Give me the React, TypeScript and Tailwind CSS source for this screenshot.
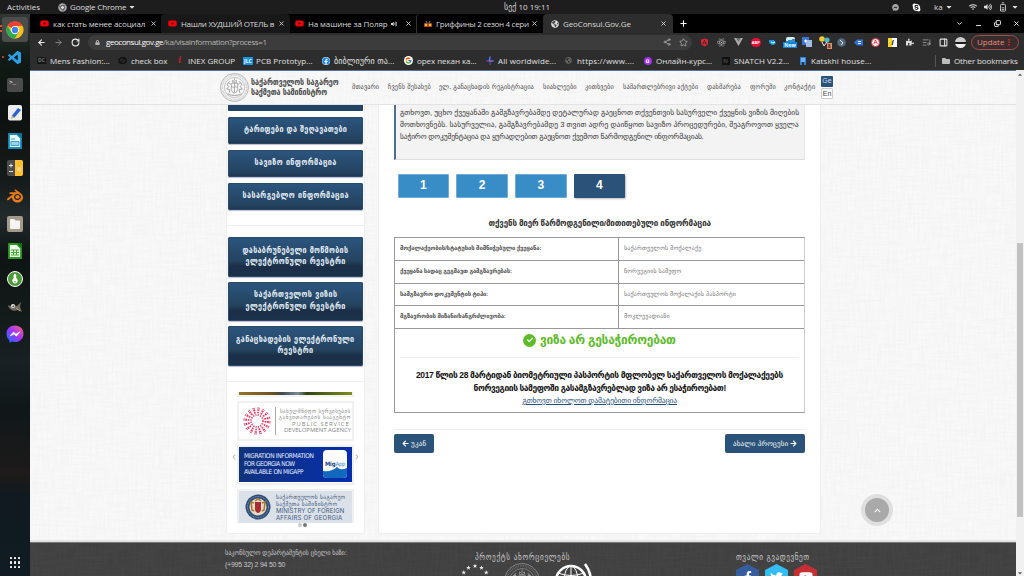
import { useLayoutEffect, useRef, useState } from "react";
import type { ReactNode } from "react";
import {
  FaYoutube, FaFacebook, FaReact, FaAngular, FaFolder, FaPuzzlePiece, FaSkype, FaFacebookMessenger,
  FaCaretDown, FaWifi, FaVolumeUp, FaLock, FaCheck, FaArrowLeft, FaArrowRight, FaGlobeAmericas, FaFacebookF,
  FaTwitter, FaKey, FaChevronUp, FaChevronLeft, FaChevronRight,
} from "react-icons/fa";
import { FcGoogle } from "react-icons/fc";
import { VscVscode } from "react-icons/vsc";
import { SiBlender } from "react-icons/si";
import { ArrowLeft, ArrowRight, RotateCw, Share2, Star, X, Plus, ChevronDown, Minus, Copy, PanelRight, ListMusic, BatteryMedium } from "lucide-react";

/* One line of text, tracked so that it takes exactly the given width. */
function Line({ w, className = "", children }: { w: number; className?: string; children: string }) {
  const ref = useRef<HTMLSpanElement>(null);
  const [spacing, setSpacing] = useState(0);
  useLayoutEffect(() => {
    if (ref.current) setSpacing((w - ref.current.offsetWidth) / children.length);
  }, [w, children]);
  return (
    <span className={`inline-block shrink-0 whitespace-nowrap text-left ${className}`} style={{ width: w }}>
      <span ref={ref} className="inline-block [text-decoration:inherit]" style={{ letterSpacing: spacing }}>{children}</span>
    </span>
  );
}

function Linen({ dark = false }: { dark?: boolean }) {
  const id = dark ? "linen-dark" : "linen";
  return (
    <svg className={dark ? "absolute inset-0 h-full w-full opacity-[0.04]" : "absolute inset-0 h-full w-full opacity-[0.055]"} aria-hidden="true">
      <filter id={id + "h"}><feTurbulence type="fractalNoise" baseFrequency="0.04 0.5" numOctaves="2" /><feColorMatrix type="matrix" values="0 0 0 0 0.4  0 0 0 0 0.4  0 0 0 0 0.4  0 0 0 2.4 -0.9" /></filter>
      <filter id={id + "v"}><feTurbulence type="fractalNoise" baseFrequency="0.5 0.04" numOctaves="2" /><feColorMatrix type="matrix" values="0 0 0 0 0.4  0 0 0 0 0.4  0 0 0 0 0.4  0 0 0 2.4 -0.9" /></filter>
      <rect width="100%" height="100%" filter={`url(#${id}h)`} />
      <rect width="100%" height="100%" filter={`url(#${id}v)`} />
    </svg>
  );
}

function ChromeLogo({ size }: { size: number }) {
  return (
    <svg width={size} height={size} viewBox="0 0 48 48">
      <circle cx="24" cy="24" r="23" fill="#fbc116" />
      <path d="M24 24 4 12.500A23 23 0 0 1 44 12.500L24 13Z" fill="#e94235" />
      <path d="M4 12.500A23 23 0 0 0 23 47L34 29 14 29Z" fill="#31a852" />
      <circle cx="24" cy="24" r="11" fill="#fff" />
      <circle cx="24" cy="24" r="8.500" fill="#3f83f1" />
    </svg>
  );
}

function TopBar() {
  return (
    <div className="flex h-[14px] items-center bg-[#1d1d1d] text-[8px] text-[#dedede]">
      <div className="flex w-[504px] items-center pl-[7px]">
        <Line w={33}>Activities</Line>
        <svg className="ml-[18px]" width="9" height="9" viewBox="0 0 20 20"><circle cx="10" cy="10" r="9.500" fill="#aaa" /><circle cx="10" cy="10" r="4.500" fill="#ddd" stroke="#444" strokeWidth="2" /><path d="M10 5h9M6 12 2 5M14 12l-4 7" stroke="#555" strokeWidth="1.500" /></svg>
        <Line w={56} className="ml-[3px]">Google Chrome</Line>
        <FaCaretDown size={8} className="ml-[2px]" />
      </div>
      <Line w={46}>სექ 10  19:11</Line>
      <div className="ml-auto flex items-center">
        <FaFacebookMessenger size={7} className="text-[#aaa]" />
        <FaSkype size={9} className="ml-[13px] text-white" />
        <Line w={9} className="ml-[13px]">ka</Line>
        <FaCaretDown size={8} className="ml-[2px]" />
        <FaWifi size={8} className="ml-[16px]" />
        <FaVolumeUp size={8} className="ml-[7px]" />
        <BatteryMedium size={10} className="ml-[6px] -rotate-90" />
        <FaCaretDown size={8} className="ml-[3px] mr-[5px]" />
      </div>
    </div>
  );
}

function Dock() {
  const icons: ReactNode[] = [
    <div className="grid h-[25px] w-[26px] place-items-center rounded-[3px] bg-[#4a4d4b]"><ChromeLogo size={18} /></div>,
    <VscVscode size={16} className="text-[#2b9fe8]" />,
    <div className="h-[14px] w-[16px] rounded-[2px] bg-[#4b4b4b] pl-[2px] font-mono text-[6px] leading-[9px] text-white">&gt;_</div>,
    <svg width="15" height="16" viewBox="0 0 15 16"><rect width="14" height="15.500" rx="2" fill="#ededed" /><path d="M4 10.500 10 3l3 2-6.500 7.500-3 1Z" fill="#2c62d0" /><path d="m3.500 13.500.8-3 2.200 2Z" fill="#e6b271" /></svg>,
    <svg width="14" height="16" viewBox="0 0 14 16"><path d="M1 1h8l4 4v10H1Z" fill="#e9f6fc" stroke="#178cba" strokeWidth="1.800" /><path d="M9 0h5v5Z" fill="#0c6e97" /><path d="M3 6h4M3 8.500h8v4H3Z" stroke="#36a3d0" strokeWidth="1" fill="#9fd0e8" /></svg>,
    <svg width="16" height="16" viewBox="0 0 16 16"><rect width="16" height="16" rx="2" fill="#4d4d4d" /><path d="M8 0h6a2 2 0 0 1 2 2v12a2 2 0 0 1-2 2H8Z" fill="#fdc02f" /><path d="M2 5.500h4M4 3.500v4M2 11.500h4M10 8h4M10 10h4" stroke="#f4f4f4" strokeWidth=".9" /></svg>,
    <SiBlender size={16} className="text-[#ea7b17]" />,
    <svg width="16" height="16" viewBox="0 0 16 16"><rect width="16" height="16" rx="2" fill="#a39a8b" /><path d="M3 4q0-1 1-1h3l1.500 1.500H12q1 0 1 1V12q0 1-1 1H4q-1 0-1-1Z" fill="#f6f4f0" /></svg>,
    <svg width="14" height="16" viewBox="0 0 14 16"><path d="M1 1h8l4 4v10H1Z" fill="#f0f9ec" stroke="#289c1c" strokeWidth="1.800" /><path d="M9 0h5v5Z" fill="#0d7510" /><path d="M3 7h8M3 9.500h8M3 12h8M5.500 7v5M8.500 7v5" stroke="#3ca92f" /></svg>,
    <div className="grid size-[16px] place-items-center rounded-full border-[1.5px] border-white bg-[#4e9a3b] text-white"><FaKey size={8} className="rotate-[135deg]" /></div>,
    <svg width="16" height="12" viewBox="0 0 16 12"><path d="M1 4q3 2 5 0l4 1 4-4-1 5 2 5-4-2q-5 2-8-1Q1 6 1 4" fill="#716c60" /><circle cx="6" cy="5" r="2" fill="#eee" /><circle cx="6.200" cy="5.200" r=".8" fill="#111" /><path d="m9 7 4 3" stroke="#b9a273" /></svg>,
    <svg width="18" height="18" viewBox="0 0 18 18"><defs><linearGradient id="msg" x1="0" y1="1" x2="1" y2="0"><stop stopColor="#087bff" /><stop offset=".5" stopColor="#a033ff" /><stop offset="1" stopColor="#ff6968" /></linearGradient></defs><path d="M9 .5c5 0 8.500 3.600 8.500 8.200S14 17 9 17q-1.500 0-2.800-.4L3.500 17.700 3.400 15.200Q.500 12.800.500 8.700C.500 4 4 .500 9 .500Z" fill="url(#msg)" /><path d="m4 11 3.500-4 2.500 2 4-2.200-3.500 4.400-2.600-2Z" fill="#fff" stroke="#fff" strokeWidth=".5" /></svg>,
  ];
  return (
    <div className="relative flex w-[30px] shrink-0 flex-col bg-[#151c1d] bg-[linear-gradient(180deg,#323834_0,#111a16_8%,#0d110f_18%,#161c1b_30%,#222a2c_36%,#0e1413_43%,#141b1b_55%,#182024_62%,#101719_70%,#1d1a1a_82%,#101a20_86%,#111b23_100%)]">
      <div className="h-[2px]" />
      {icons.map((icon, i) => (
        <div key={i} className="grid h-[27.7px] w-[30px] shrink-0 place-items-center">{icon}</div>
      ))}
      <div className="absolute left-0 top-[11px] h-[7px] w-[2px] border-y-[2px] border-[#e95420]" />
      <div className="absolute left-[2px] top-[42px] size-[2px] rounded-full bg-[#e95420]" />
      <div className="mx-auto mb-[8px] mt-auto grid grid-cols-3 gap-[2px]">
        {Array.from({ length: 9 }, (_, i) => <i key={i} className="size-[2.300px] rounded-[0.500px] bg-[#f1f1f1]" />)}
      </div>
    </div>
  );
}

function Tab({ icon, title, width, textWidth, extra, tone = "" }: { icon: ReactNode; title: string; width: string; textWidth: number; extra?: ReactNode; tone?: string }) {
  return (
    <div className={`flex h-full shrink-0 items-center rounded-t-[4px] text-[8px] text-[#d8d8d8] ${width} ${tone}`}>
      <span className="grid w-[9px] place-items-center">{icon}</span>
      <Line w={textWidth} className="ml-[4px]">{title}</Line>
      <span className="ml-auto flex items-center gap-[8px]">{extra}<X size={7} strokeWidth={3} /></span>
    </div>
  );
}

function Tabs() {
  const yt = <FaYoutube size={9} className="text-[#f4000b]" />;
  return (
    <div className="flex h-[19px] items-stretch bg-black">
      <Tab icon={yt} title="как стать менее асоциал" width="w-[131px] pl-[10px] pr-[4px]" textWidth={92} />
      <Tab icon={yt} title="Нашли ХУДШИЙ ОТЕЛЬ в" width="w-[129px] pl-[7px] pr-[5px]" textWidth={93} tone="bg-[#181818]" />
      <Tab icon={yt} title="На машине за Поляр" width="w-[126px] pl-[5px] pr-[4px]" textWidth={80} extra={<FaVolumeUp size={6} />} />
      <Tab icon={<svg width="8" height="8" viewBox="0 0 8 8"><path d="M0 3h8v4H0Z" fill="#a33a22" /><circle cx="2" cy="5" r="1.300" fill="#ffb629" /><circle cx="6" cy="5" r="1.300" fill="#ffb629" /><path d="m2 1 1 2M6 1 5 3" stroke="#29a69a" /></svg>} title="Гриффины 2 сезон 4 сери" width="w-[127px] border-l border-[#333] pl-[6px] pr-[5px]" textWidth={93} />
      <Tab icon={<FaGlobeAmericas size={8} />} title="GeoConsul.Gov.Ge" width="w-[130px] pl-[7px] pr-[6px]" textWidth={68} tone="bg-[#2d2d2d]" />
      <div className="flex flex-1 items-center justify-between pl-[6px] pr-[4px] text-white">
        <Plus size={9} strokeWidth={3} />
        <div className="flex items-center gap-[12px]">
          <ChevronDown size={7} strokeWidth={3} /><Minus size={7} strokeWidth={3} className="translate-y-[2px]" /><Copy size={7} strokeWidth={3} className="-scale-y-100" /><X size={7} strokeWidth={3} />
        </div>
      </div>
    </div>
  );
}

function Toolbar() {
  const extensions: ReactNode[] = [
    <FaAngular size={9} className="text-[#df2435]" />,
    <FaReact size={9} className="text-[#bbb]" />,
    <svg width="9" height="8" viewBox="0 0 9 8"><path d="M0 0h2.500l2 3.500L6.500 0H9L4.500 8Z" fill="#aaa" /><path d="M2.500 0h1.500l.5 1 .5-1h1.500l-2 3.500Z" fill="#777" /></svg>,
    <span className="rounded-full bg-[#e40d36] px-px text-[4px] font-bold leading-[9px] text-white">ABP</span>,
    <svg width="9" height="9" viewBox="0 0 9 9"><path d="M1 2h5l2 3-2 2H4L1 5Z" fill="#1496e1" /><path d="m3 4 2 1 2-1" stroke="#fff" fill="none" /></svg>,
    <span className="flex flex-col items-center"><i className="h-[5px] w-[9px] rounded-t-[2px] bg-[linear-gradient(165deg,#d5edf4_55%,#2f8fc5_56%)]" /><b className="bg-[#0b83e2] px-px text-[5px] leading-[6px] text-white">New</b></span>,
    <svg width="10" height="10" viewBox="0 0 10 10"><rect width="7" height="8" fill="#3976d9" /><rect x="4" y="3" width="6" height="7" fill="#a4bce2" /><path d="M2 4h3M3.500 2.500v3" stroke="#fff" /></svg>,
    <span className="relative"><svg width="11" height="12" viewBox="0 0 11 12"><circle cx="3" cy="3" r="2.800" fill="#f1ca33" /><circle cx="8" cy="4" r="2.600" fill="#51b6c5" /><path d="M3 6l2 4 3-4" stroke="#eee" fill="none" /></svg><b className="absolute -bottom-[1px] -right-[2px] bg-[#f18a66] px-[1px] text-[5px] leading-[6px] text-[#333]">8</b></span>,
    <svg width="9" height="9" viewBox="0 0 9 9"><circle cx="4.500" cy="4.500" r="4.300" fill="#53697e" /><path d="m3 2 3 3-2 2" stroke="#eaeaea" fill="none" /></svg>,
    <svg width="9" height="7" viewBox="0 0 9 7"><path d="m0 3.500 3-3h6v6H3Z" fill="#2b73d7" /><path d="M4 2.500h3M4 4.500h3" stroke="#fff" /></svg>,
    <span className="grid size-[9px] place-items-center rounded-full border border-[#e62937] bg-white text-[6px] font-bold leading-none text-[#e62937]">A</span>,
    <span className="grid size-[9px] place-items-center bg-[linear-gradient(90deg,#fcd52b_50%,#fff_50%)] text-[7px] font-bold italic leading-none text-black">i</span>,
    <FaPuzzlePiece size={8} className="text-[#ddd]" />,
    <ListMusic size={9} className="text-[#aaa]" />,
    <PanelRight size={9} className="text-[#ddd]" strokeWidth={3} />,
    <span className="size-[11px] rounded-full bg-[linear-gradient(180deg,#ccc_0_45%,#1c1c1c_45%_65%,#eee_65%)]" />,
  ];
  return (
    <div className="flex h-[18px] items-center bg-[#2d2d2d] text-[8px]">
      <div className="flex w-[58px] items-center gap-[8px] pl-[7px] text-[#e7e7e7]">
        <ArrowLeft size={9} strokeWidth={3} /><ArrowRight size={9} strokeWidth={2.500} className="text-[#888]" /><RotateCw size={9} strokeWidth={3} />
      </div>
      <div className="flex h-[15px] w-[604px] items-center rounded-full bg-[#3c3c3c] pl-[7px] pr-[4px] text-[#b4b4b4]">
        <FaLock size={5} />
        <Line w={57} className="ml-[6px] text-white">geoconsul.gov.ge</Line>
        <Line w={104}>/ka/visaInformation?process=1</Line>
        <Share2 size={8} className="ml-auto" /><Star size={9} className="ml-[8px]" />
      </div>
      <div className="ml-[4px] flex">
        {extensions.map((e, i) => <span key={i} className="grid h-[14px] w-[17.100px] place-items-center">{e}</span>)}
      </div>
      <div className="ml-auto mr-[5px] flex h-[15px] w-[48px] shrink-0 items-center justify-between rounded-full border border-[#9c514c] bg-[#382d2c] pl-[5px] pr-[5px] text-[#f08b82]">
        <Line w={27}>Update</Line><b className="text-[#d92d25]">⋮</b>
      </div>
    </div>
  );
}

function Bookmarks() {
  const items: [ReactNode, string, number, string][] = [
    [<b className="bg-[#151515] px-[1px] text-[5px] leading-[7px] text-[#777]">DC</b>, "Mens Fashion:...", 60, "w-[81px]"],
    [<svg width="9" height="7" viewBox="0 0 9 7"><ellipse cx="4.500" cy="3.500" rx="3.700" ry="2.800" fill="none" stroke="#111" strokeWidth="1.400" /><path d="m2 5 5-3" stroke="#111" /></svg>, "check box", 36, "w-[57px]"],
    [<b className="font-serif text-[9px] italic leading-none text-[#c4262e]">i</b>, "INEX GROUP", 47, "w-[68px]"],
    [<b className="bg-[#1694e9] px-px text-[5px] leading-[8px] text-white">JLC</b>, "PCB Prototyp...", 57, "w-[78px]"],
    [<FaFacebook size={8} className="rounded-full bg-white text-[#1688ec]" />, "ბიბლიური თა...", 61, "w-[83px]"],
    [<span className="grid size-[9px] place-items-center rounded-full bg-white"><FcGoogle size={7} /></span>, "орех пекан ка...", 60, "w-[81px]"],
    [<svg width="8" height="9" viewBox="0 0 8 9"><circle cx="4" cy="4.500" r="3.800" fill="#112f66" /><path d="M4 0v9M0 5h8" stroke="#cc3f46" /><path d="M4 1 3 5h4" stroke="#4a90d8" fill="none" /></svg>, "All worldwide...", 58, "w-[79px]"],
    [<FaGlobeAmericas size={7} className="text-[#666]" />, "https://www....", 57, "w-[79px]"],
    [<span className="grid size-[8px] place-items-center rounded-full bg-[#a034ec] text-[6px] font-bold leading-none text-white">û</span>, "Онлайн-курс...", 56, "w-[78px]"],
    [<b className="size-[8px] bg-[#111] text-center text-[6px] leading-[8px] text-[#444]">N</b>, "SNATCH V2.2...", 55, "w-[77px]"],
    [<svg width="8" height="8" viewBox="0 0 8 8"><path d="M1 0h6v8H5V5H3v3H1Z" fill="#2984e1" /><path d="M2 2h4M2 4h4" stroke="#c5dff9" /></svg>, "Katskhi house...", 60, "w-[80px]"],
  ];
  return (
    <div className="flex h-[19px] items-center bg-[#2d2d2d] pl-[7px] text-[8px] text-[#e0e0e0]">
      {items.map(([icon, label, w, cell]) => (
        <div key={label} className={`flex shrink-0 items-center gap-[4px] ${cell}`}><span className="grid w-[9px] place-items-center">{icon}</span><Line w={w}>{label}</Line></div>
      ))}
      <div className="ml-auto flex items-center gap-[4px] border-l border-[#555] pl-[6px] pr-[6px]"><FaFolder size={8} className="text-[#bdbdbd]" /><Line w={64}>Other bookmarks</Line></div>
    </div>
  );
}

function Seal({ size, color }: { size: number; color: string }) {
  return (
    <svg width={size} height={size} viewBox="0 0 56 56" fill="none" stroke={color} className="shrink-0">
      <circle cx="28" cy="28" r="27" strokeWidth="1.200" /><circle cx="28" cy="28" r="23.500" strokeWidth="3" strokeDasharray="1.200 1.400" opacity=".5" /><circle cx="28" cy="28" r="19.500" strokeWidth="1" />
      <path d="M22 20v12q0 5 6 7 6-2 6-7V20ZM28 20v18M22 27h12M24 18v-4l4 2 4-2v4Zm4-4v-4" strokeWidth="1.300" />
      <path d="M21 22q-7-6-7 1l3 3-4 5 6 1-1 6M35 22q7-6 7 1l-3 3 4 5-6 1 1 6M14 40q14 7 28 0M19 16l-3 3M37 16l3 3" strokeWidth="1.600" />
    </svg>
  );
}

function SiteHeader() {
  const nav: [string, number, string][] = [
    ["მთავარი", 27, "w-[36px]"], ["ჩვენს შესახებ", 43, "w-[51px]"], ["ელ. განაცხადის რეგისტრაცია", 95, "w-[104px]"], ["სიახლეები", 34, "w-[42px]"],
    ["კითხვები", 29, "w-[38px]"], ["სამართლებრივი აქტები", 75, "w-[84px]"], ["დახმარება", 34, "w-[43px]"], ["ფორუმი", 26, "w-[34px]"], ["კონტაქტი", 31, "w-[37px]"],
  ];
  return (
    <header className="relative flex h-[35px] items-center border-b border-t border-b-[#e3e3e3] border-t-[#55729b] pl-[190px] font-['DejaVu_Sans_Condensed','DejaVu_Sans',sans-serif]">
      <Seal size={29} color="#929292" />
      <div className="ml-[2px] flex w-[101px] flex-col text-[8px] font-bold leading-[10px] text-[#484848]">
        <Line w={88}>საქართველოს საგარეო</Line><Line w={76}>საქმეთა სამინისტრო</Line>
      </div>
      {nav.map(([label, w, cell]) => <span key={label} className={`flex text-[7px] text-[#444] ${cell}`}><Line w={w}>{label}</Line></span>)}
      <div className="flex flex-col gap-[1px] text-center font-['Liberation_Sans',sans-serif] text-[7px] leading-[10px]">
        <span className="h-[11px] w-[12px] rounded-[1px] bg-[#2b5278] text-[#d5dfe8]">Ge</span>
        <span className="h-[11px] w-[12px] rounded-[1px] border border-[#ccc] bg-white leading-[9px] text-[#444]">En</span>
      </div>
    </header>
  );
}

function MenuButton({ lines }: { lines: [string, number][] }) {
  const tall = lines.length > 1;
  return (
    <div className={`flex shrink-0 flex-col items-center justify-center rounded-[1px] border border-[#2a4a6b] pb-[1px] text-[8px] font-bold leading-[11.500px] text-[#e6eef6] shadow-[0_1px_1px_#bbc] ${tall ? "h-[39.500px] bg-[linear-gradient(180deg,#2c557e_0%,#24435f_60%,#1b2f47_75%,#1b314a_100%)]" : "h-[27.500px] bg-[linear-gradient(180deg,#2c557e,#234260_85%,#1f3853)]"}`}>
      {lines.map(([text, w]) => <Line key={text} w={w}>{text}</Line>)}
    </div>
  );
}

function Banners() {
  return (
    <div className="flex items-center justify-between px-[4px]">
      <FaChevronLeft size={6} className="text-[#bbb]" />
      <div className="flex h-[131px] w-[118px] flex-col gap-[4px] overflow-hidden">
        <div className="h-[5px] shrink-0 border-x-2 border-b-2 border-[#f3f3f3] bg-[linear-gradient(90deg,#927525,#6a521e_30%,#41484b_38%,#7a8b9c_52%,#314515_60%,#81901b)]" />
        <div className="flex h-[40px] shrink-0 items-center border-2 border-[#f1f1f1] bg-white pl-[4px]">
          <svg width="28" height="28" viewBox="0 0 28 28" fill="none" stroke="#e9375e">{[6, 8.500, 11, 13].map((r, i) => <circle key={r} cx="14" cy="14" r={r} strokeWidth={i === 3 ? 1 : 1.700} strokeDasharray={`${(r * 6.2832) / 32} ${(r * 6.2832) / 32}`} />)}</svg>
          <div className="ml-[4px] flex h-[28px] flex-col items-end justify-center border-l border-[#aaa] pl-[3px] font-['DejaVu_Sans_Condensed'] text-[5.500px] leading-[6.500px] text-[#858585]">
            <Line w={71}>სახელმწიფო სერვისების</Line><Line w={72}>განვითარების სააგენტო</Line>
            <Line w={59} className="font-['Open_Sans'] text-[6px]">PUBLIC  SERVICE</Line><Line w={67} className="font-['Open_Sans'] text-[6px]">DEVELOPMENT AGENCY</Line>
          </div>
        </div>
        <div className="h-[40px] shrink-0 border-2 border-[#f1f1f1]">
          <div className="flex h-[35px] items-center bg-[linear-gradient(90deg,#10337c,#062eae)] pl-[5px] text-[6.500px] leading-[8px] text-[#e7efff]">
            <div className="flex w-[79px] flex-col"><Line w={70}>MIGRATION INFORMATION</Line><Line w={51}>FOR GEORGIA NOW</Line><Line w={59}>AVAILABLE ON MIGAPP</Line></div>
            <svg width="25" height="29" viewBox="0 0 25 29"><rect width="24" height="28" rx="4" fill="#fff" /><path d="M0 21q9 1 14-4 3 4 10 1v6q0 4-4 4H4q-4 0-4-4Z" fill="#1268bf" /><text x="2" y="15.500" fontSize="6" fontWeight="bold" fill="#234685" textLength="10.500">Mig</text><text x="12.500" y="15.500" fontSize="6" fill="#3b80bd" textLength="10">App</text></svg>
          </div>
        </div>
        <div className="flex h-[34px] shrink-0 items-center border-2 border-b-0 border-[#f1f1f1] bg-[#dbe1e8] pl-[6px]">
          <svg width="26" height="26" viewBox="0 0 26 26"><circle cx="13" cy="13" r="12.500" fill="#304c77" /><circle cx="13" cy="13" r="10.500" fill="none" stroke="#b9c3d2" strokeDasharray="1 .7" opacity=".6" /><circle cx="13" cy="13" r="8.500" fill="#e5dcc7" /><path d="M10 8v7q0 3 3 4 3-1 3-4V8Z" fill="#a82c34" /><path d="M9 9 6 8l1 8 2 1M17 9l3-1-1 8-2 1M10 7l3-2 3 2" fill="none" stroke="#aa762b" strokeWidth="1.500" /></svg>
          <div className="ml-[5px] flex flex-col font-['DejaVu_Sans_Condensed'] text-[6px] leading-[7px] text-[#3d587f]">
            <Line w={69}>საქართველოს საგარეო</Line><Line w={61}>საქმეთა სამინისტრო</Line><Line w={68} className="font-['Inter'] text-[6px]">MINISTRY OF FOREIGN</Line><Line w={66} className="font-['Inter'] text-[6px]">AFFAIRS OF GEORGIA</Line>
          </div>
        </div>
      </div>
      <FaChevronRight size={6} className="text-[#bbb]" />
    </div>
  );
}

function Sidebar() {
  return (
    <aside className="h-[429px] w-[139px] overflow-hidden rounded-b-[3px] border border-t-0 border-[#eee] bg-white font-['DejaVu_Sans_Condensed','DejaVu_Sans',sans-serif]">
      <div className="flex flex-col gap-[5.500px] px-[1px]">
        <div className="h-[6px] rounded-b-[1px] bg-[#214466]" />
        <MenuButton lines={[["ტარიფები და შეღავათები", 103]]} />
        <MenuButton lines={[["სავიზო ინფორმაცია", 82]]} />
        <MenuButton lines={[["სასარგებლო ინფორმაცია", 106]]} />
      </div>
      <hr className="mb-[11px] mt-[15px] border-[#eee]" />
      <div className="flex flex-col gap-[5px] px-[1px]">
        <MenuButton lines={[["დასაბრუნებელი მოწმობის", 106], ["ელექტრონული რეესტრი", 100]]} />
        <MenuButton lines={[["საქართველოს ვიზის", 83], ["ელექტრონული რეესტრი", 100]]} />
        <MenuButton lines={[["განაცხადების ელექტრონული", 119], ["რეესტრი", 36]]} />
      </div>
      <hr className="mb-[10px] mt-[15px] border-[#eee]" />
      <Banners />
      <div className="flex justify-center gap-[1px] pl-[14px]"><i className="size-[4px] rounded-full bg-[#ccc]" /><i className="size-[4px] rounded-full bg-[#777]" /></div>
    </aside>
  );
}

function Main() {
  const rows: [string, number, string, number][] = [
    ["მოქალაქეობის/სტატუსის მიმნიჭებული ქვეყანა:", 141, "საქართველოს მოქალაქე", 77],
    ["ქვეყანა სადაც გეგმავთ გამგზავრებას:", 112, "ნორვეგიის სამეფო", 57],
    ["სამგზავრო დოკუმენტის ტიპი:", 88, "საქართველოს მოქალაქის პასპორტი", 112],
    ["მგზავრობის მიზანი/ხანგრძლივობა:", 106, "მოკლევადიანი", 46],
  ];
  return (
    <main className="flex h-[429px] w-[443px] flex-col rounded-b-[3px] border border-t-0 border-[#eee] bg-white px-[15px] font-['Liberation_Sans','DejaVu_Sans',sans-serif]">
      <div className="flex h-[54.500px] flex-col border-b border-l-2 border-r border-b-[#ddd] border-l-[#4d7091] border-r-[#e9e9e9] bg-[#f3f3f3] pl-[4px] pt-[2px] text-[7.500px] leading-[12px] text-[#333]">
        <Line w={399}>გთხოვთ, უცხო ქვეყანაში გამგზავრებამდე დეტალურად გაეცნოთ თქვენთვის სასურველი ქვეყნის ვიზის მიღების</Line>
        <Line w={399}>მოთხოვნებს. სასურველია, გამგზავრებამდე 3 თვით ადრე დაიწყოთ სავიზო პროცედურები, შეაგროვოთ ყველა</Line>
        <Line w={304}>საჭირო დოკუმენტაცია და ყურადღებით გაეცნოთ ქვემოთ წარმოდგენილ ინფორმაციას.</Line>
      </div>
      <div className="mt-[14.500px] flex gap-[7px] pl-[3.500px] text-center text-[12px] font-bold leading-[23px] text-white">
        {["1", "2", "3"].map((n) => <div key={n} className="h-[24px] w-[51.700px] rounded-[1px] border border-[#70abd5] bg-[#398dc7] leading-[21px]">{n}</div>)}
        <div className="h-[24px] w-[51.700px] rounded-[1px] bg-[#2b5278] shadow-[1px_1px_2px_#bbb]">4</div>
      </div>
      <div className="mt-[20px] flex h-[19px] justify-center text-[8px] font-bold leading-[12px] text-[#333]"><Line w={222}>თქვენს მიერ წარმოდგენილი/მითითებული ინფორმაცია</Line></div>
      <div className="flex h-[176px] flex-col border border-[#999] border-r-[#ccc]">
        {rows.map(([label, w, value, vw]) => (
          <div key={label} className="grid h-[22.800px] grid-cols-[224px_1fr] border-b border-[#999] text-[6px] leading-[21px]">
            <div className="border-r border-[#999] pl-[5px] font-bold text-[#555]"><Line w={w}>{label}</Line></div>
            <div className="pl-[5px] text-[#777]"><Line w={vw}>{value}</Line></div>
          </div>
        ))}
        <div className="flex flex-1 flex-col items-center px-[5px]">
          <div className="flex h-[29px] w-full items-center justify-center gap-[4px] border-b border-[#eee] pb-[6px] text-[12px] font-bold leading-[16px] text-[#5ebb2b]">
            <span className="grid size-[13px] place-items-center rounded-full bg-[#5ebb2b] text-white"><FaCheck size={6} /></span>
            <Line w={136}>ვიზა არ გესაჭიროებათ</Line>
          </div>
          <div className="flex flex-col items-center pt-[11px] text-[8.500px] font-bold leading-[12.500px] text-[#151515]">
            <Line w={367}>2017 წლის 28 მარტიდან ბიომეტრიული პასპორტის მფლობელ საქართველოს მოქალაქეებს</Line>
            <Line w={252}>ნორვეგიის სამეფოში გასამგზავრებლად ვიზა არ ესაჭიროებათ!</Line>
          </div>
          <Line w={154} className="mt-px text-[7.500px] leading-[12px] text-[#24517c] underline">გთხოვთ იხოლოთ დამატებითი ინფორმაცია</Line>
        </div>
      </div>
      <hr className="mb-[4px] mt-[16px] border-[#eee]" />
      <div className="flex justify-between text-[7px] leading-[18px] text-white">
        <div className="flex h-[19px] w-[40px] items-center justify-center gap-[2px] rounded-[2px] bg-[#2b5278]"><FaArrowLeft size={7} /><Line w={15}>უკან</Line></div>
        <div className="flex h-[19px] w-[80px] items-center justify-center gap-[2px] rounded-[2px] bg-[#2b5278]"><Line w={55}>ახალი პროცესი</Line><FaArrowRight size={7} /></div>
      </div>
    </main>
  );
}

function Hex({ color, children }: { color: string; children: ReactNode }) {
  return (
    <div className="relative grid h-[26px] w-[23px] place-items-center text-white">
      <svg className="absolute inset-0" width="23" height="26" viewBox="0 0 23 26"><path d="m11.500 0 11.500 6v14l-11.500 6L0 20V6Z" fill={color} /></svg>
      <span className="relative">{children}</span>
    </div>
  );
}

function Footer() {
  return (
    <footer className="relative flex h-[34px] shrink-0 overflow-hidden border-t border-[#777] bg-[#404040] font-['DejaVu_Sans_Condensed','DejaVu_Sans',sans-serif] text-[7px] text-[#c9c9c9]">
      <Linen dark />
      <div className="relative ml-[195px] flex w-[235px] flex-col pt-[4px] leading-[12px]">
        <Line w={122}>საკონსულო დეპარტამენტის ცხელი ხაზი:</Line>
        <Line w={60} className="font-['Liberation_Sans']">(+995 32) 2 94 50 50</Line>
      </div>
      <div className="relative w-[276px] pt-[9px] text-[8px] leading-[11px]">
        <div className="pl-[15px]"><Line w={95}>პროექტს ახორციელებს</Line></div>
        <div className="flex gap-[14px]">
          <svg width="30" height="30" viewBox="0 0 30 30" fill="#eee">
            {Array.from({ length: 12 }, (_, i) => (
              <path key={i} transform={`translate(${15 + 13 * Math.sin((i * Math.PI) / 6)} ${16 - 13 * Math.cos((i * Math.PI) / 6)})`} d="m0-2.300.6 1.600h1.700L.9.300l.6 1.700L0 1l-1.500 1 .6-1.700-1.400-1h1.700Z" />
            ))}
          </svg>
          <Seal size={36} color="#999" />
          <svg width="42" height="36" viewBox="0 0 42 36" fill="none" stroke="#fff"><circle cx="17" cy="18" r="15" strokeWidth="2.500" /><ellipse cx="17" cy="18" rx="7" ry="15" /><path d="M17 3v30M2 18h30M4 10q13 5 26 0" /><path d="M31 1q10 13 3 31" strokeWidth="2.500" /></svg>
        </div>
      </div>
      <div className="relative pt-[9px] text-[8px] leading-[11px]">
        <Line w={74}>თვალი გვადევნეთ</Line>
        <div className="mt-[1px] flex gap-[6px]">
          <Hex color="#365d9e"><FaFacebookF size={12} /></Hex><Hex color="#33bdf3"><FaTwitter size={13} /></Hex><Hex color="#c52f34"><FaYoutube size={14} /></Hex>
        </div>
      </div>
    </footer>
  );
}

export default function App() {
  return (
    <div className="flex h-[576px] w-[1024px] flex-col overflow-hidden font-['Open_Sans','DejaVu_Sans',sans-serif]">
      <TopBar />
      <div className="flex min-h-0 flex-1">
        <Dock />
        <div className="flex w-[994px] flex-col">
          <Tabs />
          <Toolbar />
          <Bookmarks />
          <div className="flex min-h-0 flex-1">
            <div className="relative flex w-[986px] flex-col bg-[#f9f9f9]">
              <Linen />
              <SiteHeader />
              <div className="relative flex min-h-0 flex-1 pl-[196px]">
                <Sidebar />
                <div className="w-[13px]" />
                <Main />
              </div>
              <div className="relative h-[2px] bg-[#e3e3e3]" />
              <Footer />
              <div className="absolute left-[831px] top-[424px] grid size-[32px] place-items-center rounded-full border-[4px] border-[#dfdfdf] bg-[#a9a9a9] text-white"><FaChevronUp size={7} /></div>
            </div>
            <div className="flex w-[8px] flex-col items-center justify-between bg-[#f1f1f1] text-[#555]">
              <FaCaretDown size={6} className="mt-[2px] rotate-180" />
              <div className="mt-[112px] h-[274px] w-[6px] bg-[#c1c1c1]" />
              <FaCaretDown size={6} />
            </div>
          </div>
        </div>
      </div>
    </div>
  );
}
